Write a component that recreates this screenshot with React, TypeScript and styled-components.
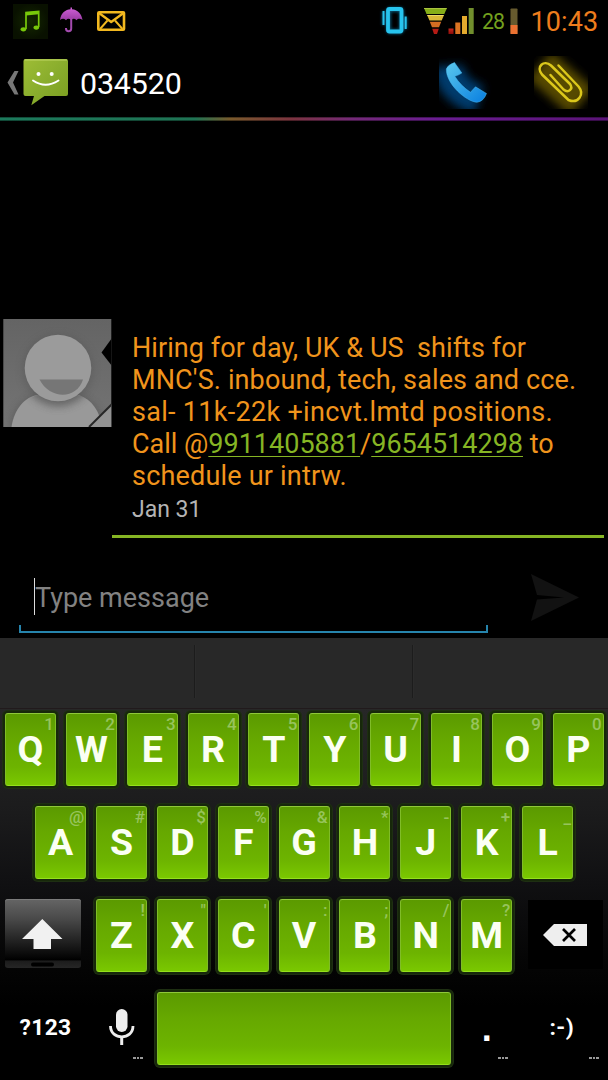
import React from "react";
import styled, { createGlobalStyle } from "styled-components";

const Global = createGlobalStyle`
  * { box-sizing: border-box; }
  body { margin: 0; background: #000; font-family: Roboto, "Liberation Sans", sans-serif; }
  svg { display: block; flex: none; }
`;

const Screen = styled.div`
  width: 608px;
  height: 1080px;
  overflow: hidden;
  background: #000;
  display: flex;
  flex-direction: column;
`;

const StatusBar = styled.div`
  height: 43px;
  display: flex;
  justify-content: space-between;
  flex: none;
`;

const Level = styled.span`
  flex: none;
  color: #74a01e;
  font-size: 21.3px;
  line-height: 44px;
  width: 32px;
  padding-left: 5px;
  letter-spacing: -0.9px;
`;

const Clock = styled.span`
  flex: none;
  color: #ee7d1d;
  font-size: 27px;
  line-height: 44px;
  width: 90px;
  padding-left: 12.5px;
  letter-spacing: 0.1px;
`;

const StatusGroup = styled.div`
  display: flex;
`;

const Header = styled.div`
  height: 74px;
  display: flex;
  flex: none;
`;

const Contact = styled.h1`
  margin: 0;
  flex: 1;
  color: #fff;
  font-size: 30.4px;
  font-weight: 400;
  line-height: 81px;
  letter-spacing: -0.15px;
`;

const Rainbow = styled.div`
  flex: none;
  height: 4px;
  background: linear-gradient(90deg, #1c7a5c 0, #1f7454 32%, #7a5a2c 38%, #7c3440 48%, #742a78 58%, #6a1d92 72%, #5b1478 100%);
  box-shadow: inset 0 1px 0 rgba(0, 0, 0, 0.35), inset 0 -1px 0 rgba(0, 0, 0, 0.4);
`;

const Thread = styled.div`
  flex: 1;
  display: flex;
  align-items: flex-end;
  padding: 0 4px 20px 3px;
`;

const Message = styled.article`
  display: flex;
  align-items: flex-start;
  height: 219px;
  width: 100%;
`;

const Bubble = styled.div`
  flex: 1;
  height: 219px;
  padding: 13px 0 0 20px;
  border-bottom: 3px solid #86b524;
`;

const Line = styled.div<{ $track?: number }>`
  height: 32px;
  line-height: 32px;
  font-size: 27px;
  color: #f0941c;
  white-space: pre;
  letter-spacing: ${(p) => p.$track ?? 0}px;
`;

const Phone = styled.a`
  color: #86b524;
  text-decoration: underline;
  text-decoration-thickness: 1px;
  text-underline-offset: 3px;
  text-decoration-skip-ink: none;
`;

const Stamp = styled.div`
  font-size: 23px;
  line-height: 35px;
  color: #b4b4b4;
`;

const Composer = styled.div`
  flex: none;
  height: 80px;
  display: flex;
`;

const Field = styled.div`
  margin: 8px 0 0 19px;
  width: 469px;
  height: 67px;
  display: flex;
  flex-direction: column;
  justify-content: space-between;
`;

const Hint = styled.div`
  margin: 12px 0 0 15px;
  height: 37px;
  border-left: 1px solid #ddd;
  color: #828282;
  font-size: 27px;
  line-height: 41px;
`;

const Underline = styled.div`
  height: 8px;
  border: 2px solid #2684ac;
  border-top: 0;
`;

const SendButton = styled.div`
  margin: 7px 0 0 36px;
`;

const Keyboard = styled.div`
  flex: none;
  height: 442px;
  display: flex;
  flex-direction: column;
`;

const Suggestions = styled.div`
  flex: none;
  height: 71px;
  background: #282828;
  border-bottom: 1px solid #211a1c;
  display: grid;
  grid-template-columns: 195px 218px 1fr;
  padding: 7px 0 10px;
`;

const Suggestion = styled.div`
  border-right: 1px solid #1c1c1c;
  box-shadow: 1px 0 0 #2b2b2b;
  &:last-child { border: 0; box-shadow: none; }
`;

const Keys = styled.div`
  flex: 1;
  padding-top: 4px;
  background: linear-gradient(#272727 0, #1b1b1c 28%, #101012 47%, #050505 68%, #000 80%);
`;

const Row = styled.div<{ $indent?: number }>`
  height: 73px;
  margin-bottom: 20px;
  padding-left: ${(p) => p.$indent ?? 0}px;
  display: flex;
  &:last-child { margin-bottom: 0; }
`;

const Key = styled.button<{ $w?: number }>`
  flex: none;
  width: ${(p) => p.$w ?? 51}px;
  height: 73px;
  margin: 0 9.86px 0 0;
  padding: 2px 3px 0 0;
  border: 1px solid #80bc28;
  border-top-color: #8fc83a;
  border-bottom-color: #94e01c;
  border-radius: 3px;
  background: linear-gradient(#5b9a00 0, #66a800 35%, #6db400 75%, #7ac800 100%);
  box-shadow: 0 0 0 2px #17280a, 0 0 0 3px #1e2f12;
  display: flex;
  flex-direction: column;
  font-family: inherit;
`;

const Alt = styled.span`
  align-self: flex-end;
  height: 17px;
  font-size: 17px;
  font-weight: 500;
  line-height: 17px;
  color: #97c45c;
  margin-right: -2px;
`;

const Letter = styled.span`
  align-self: center;
  margin-left: 3px;
  color: #fbfff3;
  font-size: 37.5px;
  font-weight: 700;
  line-height: 32px;
`;

const ShiftKey = styled.button`
  flex: none;
  width: 76px;
  height: 69px;
  margin: 0 15px 0 0;
  padding: 19px 0 0 17px;
  border: 0;
  border-radius: 3px;
  background: linear-gradient(#656565 0, #4a4a4a 28%, #232323 60%, #030303 86%, #000 88%, #1c1c1c 90%, #262626 100%);
  box-shadow: inset 0 1px 0 #7b7b7b;
`;

const PlainKey = styled.div<{ $w: number }>`
  flex: none;
  width: ${(p) => p.$w}px;
  height: 73px;
  display: flex;
  flex-direction: column;
  align-items: center;
  color: #fff;
`;

const KeyText = styled.span<{ $top?: number; $shift?: number }>`
  font-size: 22.8px;
  font-weight: 700;
  margin: ${(p) => p.$top ?? 20}px 0 0 ${(p) => p.$shift ?? 0}px;
  height: 32px;
  line-height: 32px;
  letter-spacing: 0.4px;
`;

const Period = styled(KeyText)`
  font-family: "Liberation Sans", sans-serif;
  font-size: 36px;
`;

const More = styled.div<{ $right: number }>`
  align-self: flex-end;
  margin: auto ${(p) => p.$right}px 6px 0;
  display: flex;
  gap: 1px;
  i { width: 2.6px; height: 2px; background: #999; }
`;

const Dots = ({ right }: { right: number }) => (
  <More $right={right}><i /><i /><i /></More>
);

const Notifications = () => (
  <svg width="140" height="43" viewBox="0 0 140 43">
    <defs>
      <radialGradient id="noteGlow"><stop stopColor="#142800" /><stop offset="1" stopColor="#091100" /></radialGradient>
      <linearGradient id="umb" x1="0" y1="0" x2="0" y2="1"><stop stopColor="#d060d8" /><stop offset="1" stopColor="#9a3ba4" /></linearGradient>
    </defs>
    <rect x="13" y="4" width="35" height="35" fill="url(#noteGlow)" />
    <g fill="#78c80a" stroke="#78c80a">
      <path d="M26 29V12.5L38.7 11.5V27" fill="none" strokeWidth="1.7" />
      <path d="M26 12.2L38.7 11.2V14.3L26 15.5Z" stroke="none" />
      <ellipse cx="23.4" cy="29.3" rx="2.8" ry="2.1" stroke="none" />
      <ellipse cx="36.3" cy="27.6" rx="2.8" ry="2.1" stroke="none" />
    </g>
    <path d="M60 20C61 13 65.500 9.600 70.500 9.300V7.500H72V9.300C77.500 9.800 81.700 14 82.500 20C80.500 18.300 78 18.400 76.500 20.200C74.500 18.300 73 18.300 71.300 20.200C69.500 18.300 67.500 18.300 66 20.200C64 18.300 62 18.500 60 20Z" fill="url(#umb)" />
    <path d="M71.200 18V28.500C71.200 32.200 66 32.200 66 28.500V28" fill="none" stroke="#a44baf" strokeWidth="2" />
    <g fill="none" stroke="#f2b81f" strokeWidth="2.6" strokeLinejoin="round">
      <rect x="98.300" y="12.200" width="25.700" height="17.600" rx="0.800" />
      <path d="M99 13L111.200 22L123.500 13" strokeWidth="2.300" />
      <path d="M100 29L107.500 20.500M122.500 29L115 20.500" strokeWidth="1.900" />
    </g>
  </svg>
);

const Signals = () => (
  <svg width="98" height="43" viewBox="379 0 98 43">
    <defs>
      <filter id="cyanGlow" x="-50%" y="-50%" width="200%" height="200%"><feGaussianBlur stdDeviation="1.5" /></filter>
      <linearGradient id="redBar" x1="0" y1="0" x2="0" y2="1"><stop stopColor="#c8261c" /><stop offset="1" stopColor="#8c0b08" /></linearGradient>
    </defs>
    <g fill="none" stroke="#0a6d96" strokeWidth="5" filter="url(#cyanGlow)" opacity=".8">
      <rect x="388.500" y="9.500" width="13" height="22" rx="2" /><path d="M383.500 11V25M405.700 17V29" strokeWidth="3" />
    </g>
    <g fill="none" stroke="#27c4ee">
      <rect x="388" y="9" width="13.500" height="22.500" rx="1.500" strokeWidth="3.800" />
      <path d="M383.500 11V25M405.700 16.500V29" strokeWidth="2" />
    </g>
    <path d="M424 8H447L444.300 14H426.500Z" fill="#86ae18" />
    <path d="M427 15H444L441.700 20.500H429.500Z" fill="#d9b938" />
    <path d="M429.800 21.800H441.200L439 27.300H432Z" fill="#d56d22" />
    <path d="M432.200 28.800H438.800L437 34H434Z" fill="#b51b15" />
    <path d="M424 8.500H446.500" stroke="#a9c33f" />
    <path d="M427.500 15.500H443.500" stroke="#ecd96a" />
    <rect x="448.500" y="28.500" width="5" height="5.500" fill="url(#redBar)" />
    <rect x="455.300" y="22.500" width="5" height="11.500" fill="#da7322" />
    <rect x="462" y="16" width="5" height="18" fill="#e4aa2e" />
    <rect x="468.700" y="8" width="5" height="26" fill="#718f2d" />
  </svg>
);

const Battery = () => (
  <svg width="9" height="43" viewBox="509 0 9 43">
    <rect x="510.500" y="8.500" width="7" height="25.500" rx=".8" fill="#665a2e" />
    <rect x="510.500" y="25" width="7" height="9" fill="#eb7131" />
  </svg>
);

const BackToMessages = () => (
  <svg width="80" height="74" viewBox="0 43 80 74">
    <defs><linearGradient id="chat" x1="0" y1="0" x2="1" y2="1"><stop stopColor="#9ebd35" /><stop offset=".5" stopColor="#89ad2d" /><stop offset="1" stopColor="#7b9e20" /></linearGradient></defs>
    <path d="M14.500 71H18.500L13 82.500L18.500 94.500H14.500L7.500 82.500Z" fill="#777" />
    <path d="M25.500 59H66Q68 59 68 61V94Q68 96 66 96H44.500L31.300 105.300L34 96H25.500Q23.500 96 23.500 94V61Q23.500 59 25.500 59Z" fill="url(#chat)" />
    <path d="M24.500 60H67" stroke="#bfd564" />
    <circle cx="38.500" cy="74" r="2" fill="#fff" /><circle cx="51.700" cy="74" r="2" fill="#fff" />
    <path d="M33 80.500Q45.500 89 58.500 80.500" fill="none" stroke="#fff" strokeWidth="1.900" strokeLinecap="round" />
  </svg>
);

const Actions = () => (
  <svg width="170" height="74" viewBox="438 43 170 74">
    <defs>
      <filter id="soft" x="-50%" y="-50%" width="200%" height="200%"><feGaussianBlur stdDeviation="5" /></filter>
      <linearGradient id="call" x1="0" y1="0" x2="1" y2="1"><stop stopColor="#5ac8ee" /><stop offset="1" stopColor="#087ee0" /></linearGradient>
      <clipPath id="callBox"><rect x="439" y="56" width="54" height="53" /></clipPath>
      <clipPath id="clipBox"><rect x="534" y="56" width="54" height="53" /></clipPath>
    </defs>
    <g clipPath="url(#callBox)">
      <path d="M448 66Q450 90 479 100" fill="none" stroke="#063a6c" strokeWidth="30" filter="url(#soft)" />
      <path d="M446.300 69Q447.500 65 454.500 62.500L461.800 73Q459 75 454.800 76.300Q460.500 85.500 470.500 92.300Q472.500 90 475.500 86.800L486.500 93.500Q483.500 101.500 477 102.300C466 101.500 446 84 446.300 69Z" fill="url(#call)" stroke="#49b8ee" strokeWidth=".5" />
    </g>
    <g clipPath="url(#clipBox)">
      <path d="M540 65L582 102" fill="none" stroke="#574800" strokeWidth="36" filter="url(#soft)" />
      <path d="M558.500 65.500L578.500 86.500C585 94.500 578 104 568.500 100L542 74.500C535.500 66.500 544 59.500 551 65.500L570 84C573.500 89 568.500 93.500 563.500 89.500L550.500 75" fill="none" stroke="#dbc71b" strokeWidth="2.500" strokeLinecap="round" strokeLinejoin="round" />
    </g>
  </svg>
);

const Avatar = () => (
  <svg width="109" height="108" viewBox="3 319 109 108">
    <defs>
      <filter id="shade" x="-30%" y="-30%" width="160%" height="160%"><feGaussianBlur stdDeviation="4" /></filter>
      <linearGradient id="wall" x1="0" y1="0" x2="0" y2="1"><stop stopColor="#646464" /><stop offset="1" stopColor="#747474" /></linearGradient>
      <clipPath id="photo"><rect x="3.300" y="319" width="108" height="108" /></clipPath>
      <clipPath id="body"><path d="M11.500 427C15 408 26 396 43 394H73C89 396 97 407 101 427Z" /></clipPath>
    </defs>
    <g clipPath="url(#photo)">
      <rect x="3" y="319" width="109" height="108" fill="url(#wall)" />
      <ellipse cx="57" cy="426" rx="46" ry="34" fill="#444" opacity=".45" filter="url(#shade)" />
      <path d="M11.500 427C14 409 25 397 37 395H79C92 400 100 411 102 427Z" fill="#999" />
      <g clipPath="url(#body)"><circle cx="58" cy="371" r="35" fill="#666" opacity=".8" filter="url(#shade)" /></g>
      <circle cx="58" cy="370" r="35" fill="#444" opacity=".3" filter="url(#shade)" />
      <circle cx="58" cy="368" r="33.300" fill="#9b9b9b" />
      <path d="M39.500 379.500H83C77 399.500 50 400 39.500 379.500Z" fill="#767676" />
      <path d="M89 427L112 404V427Z" fill="#929292" /><path d="M89 427L112 404" stroke="#262626" strokeWidth="2" />
      <path d="M112 338L101.500 352.500L112 366Z" fill="#000" />
    </g>
  </svg>
);

const Send = () => (
  <SendButton>
    <svg width="60" height="60" viewBox="525 565 60 60">
      <path d="M532 574L580 597.500L532 621L538 599.500L565 597.500L538 595Z" fill="#121212" />
    </svg>
  </SendButton>
);

const rows: [string, string][][] = [
  ["Q1", "W2", "E3", "R4", "T5", "Y6", "U7", "I8", "O9", "P0"],
  ["A@", "S#", "D$", "F%", "G&", "H*", "J-", "K+", "L_"],
  ["Z!", 'X"', "C'", "V:", "B;", "N/", "M?"],
].map((r) => r.map((k) => [k[0], k[1]] as [string, string]));

const LetterKeys = ({ keys }: { keys: [string, string][] }) => (
  <>
    {keys.map(([letter, alt]) => (
      <Key key={letter}><Alt>{alt}</Alt><Letter>{letter}</Letter></Key>
    ))}
  </>
);

export default function App() {
  return (
    <Screen>
      <Global />
      <StatusBar>
        <Notifications />
        <StatusGroup>
          <Signals />
          <Level>28</Level>
          <Battery />
          <Clock>10:43</Clock>
        </StatusGroup>
      </StatusBar>
      <Header>
        <BackToMessages />
        <Contact>034520</Contact>
        <Actions />
      </Header>
      <Rainbow />
      <Thread>
        <Message>
          <Avatar />
          <Bubble>
            <Line $track={0.06}>Hiring for day, UK &amp; US  shifts for</Line>
            <Line $track={0.13}>MNC'S. inbound, tech, sales and cce.</Line>
            <Line $track={0.3}>sal- 11k-22k +incvt.lmtd positions.</Line>
            <Line>Call @<Phone>9911405881</Phone>/<Phone>9654514298</Phone> to</Line>
            <Line $track={0.2}>schedule ur intrw.</Line>
            <Stamp>Jan 31</Stamp>
          </Bubble>
        </Message>
      </Thread>
      <Composer>
        <Field>
          <Hint>Type message</Hint>
          <Underline />
        </Field>
        <Send />
      </Composer>
      <Keyboard>
        <Suggestions><Suggestion /><Suggestion /><Suggestion /></Suggestions>
        <Keys>
          <Row $indent={5}><LetterKeys keys={rows[0]} /></Row>
          <Row $indent={35.2}><LetterKeys keys={rows[1]} /></Row>
          <Row $indent={5}>
            <ShiftKey>
              <svg width="42" height="50" viewBox="22 918 42 50">
                <path d="M42.300 919L62.500 939H51V949H33.500V939H22Z" fill="#f1f1f1" />
                <rect x="31" y="962.500" width="23" height="4" rx="2" fill="#000" />
              </svg>
            </ShiftKey>
            <LetterKeys keys={rows[2]} />
            <svg width="86" height="73" viewBox="522 899 86 73">
              <rect x="528" y="900" width="75" height="69" fill="#000" />
              <path d="M543 935L554 924H587V946H554Z" fill="#eee" />
              <path d="M563 929L575 941M575 929L563 941" stroke="#000" strokeWidth="2.700" />
            </svg>
          </Row>
          <Row>
            <PlainKey $w={91}><KeyText>?123</KeyText></PlainKey>
            <PlainKey $w={66}>
              <svg width="66" height="54" viewBox="91 992 66 54">
                <rect x="116" y="1009" width="11.500" height="23" rx="5.700" fill="#eee" />
                <path d="M110.500 1026C110.500 1040.500 133 1040.500 133 1026" fill="none" stroke="#eee" strokeWidth="2.800" />
                <path d="M121.700 1036V1045" stroke="#eee" strokeWidth="3" />
              </svg>
              <Dots right={14} />
            </PlainKey>
            <Key $w={294} aria-label="space" />
            <PlainKey $w={57}><Period $top={21} $shift={-5}>.</Period><Dots right={10} /></PlainKey>
            <PlainKey $w={90}><KeyText $top={20} $shift={-2}>:-)</KeyText><Dots right={9} /></PlainKey>
          </Row>
        </Keys>
      </Keyboard>
    </Screen>
  );
}
